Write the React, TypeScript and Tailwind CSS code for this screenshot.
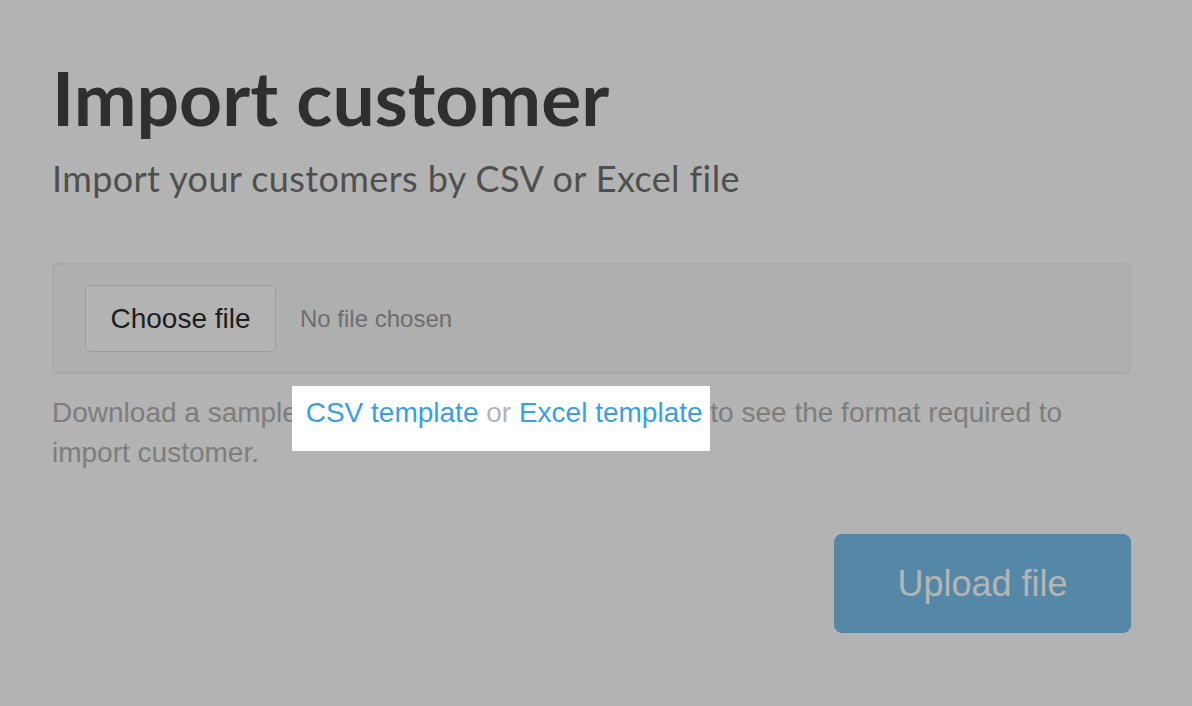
export default function App() {
  return (
    <div className="w-[1192px] h-[706px] overflow-hidden bg-[#b3b3b3]">
      <div className="pl-[52px] pr-[61px] pt-[57px]">
        <h1 className="font-['Lato',sans-serif] font-bold text-[75px] leading-[80px] text-[#2f2f2f]">
          Import customer
        </h1>
        <p className="mt-[21px] font-['Lato',sans-serif] text-[36px] leading-[40px] tracking-[0.4px] text-[#4f4f4f]">
          Import your customers by CSV or Excel file
        </p>

        <div className="mt-[65px] h-[111px] rounded-[6px] border-2 border-dotted border-[#a3a3a3] bg-[#afafaf] flex items-center pl-[31px] gap-[24px] font-['Liberation_Sans',sans-serif]">
          <button className="h-[67px] w-[191px] rounded-[5px] border border-[#9c9c9c] bg-[#b3b3b3] text-[28px] text-[#1e1e1e]">
            Choose file
          </button>
          <span className="text-[24px] text-[#6e6e6e]">No file chosen</span>
        </div>

        <p className="mt-[19px] font-['Liberation_Sans',sans-serif] text-[28px] leading-[40px] text-[#7d7d7d]">
          Download a sample{" "}
          <span className="bg-white -ml-[14px] pl-[14px] pt-[11px] pb-[23px]">
            <a className="text-[#3a9fe0]">CSV template</a>{" "}
            <span className="text-[#b5b5b5]">or</span>{" "}
            <a className="text-[#3a9fe0]">Excel template</a>{" "}
          </span>
          to see the format required to import customer.
        </p>

        <div className="mt-[61px] flex justify-end">
          <button className="h-[99px] w-[297px] rounded-[8px] border border-[#4f85a7] bg-[#5588a6] font-['Liberation_Sans',sans-serif] text-[36px] text-[#b5b5b5]">
            Upload file
          </button>
        </div>
      </div>
    </div>
  )
}
